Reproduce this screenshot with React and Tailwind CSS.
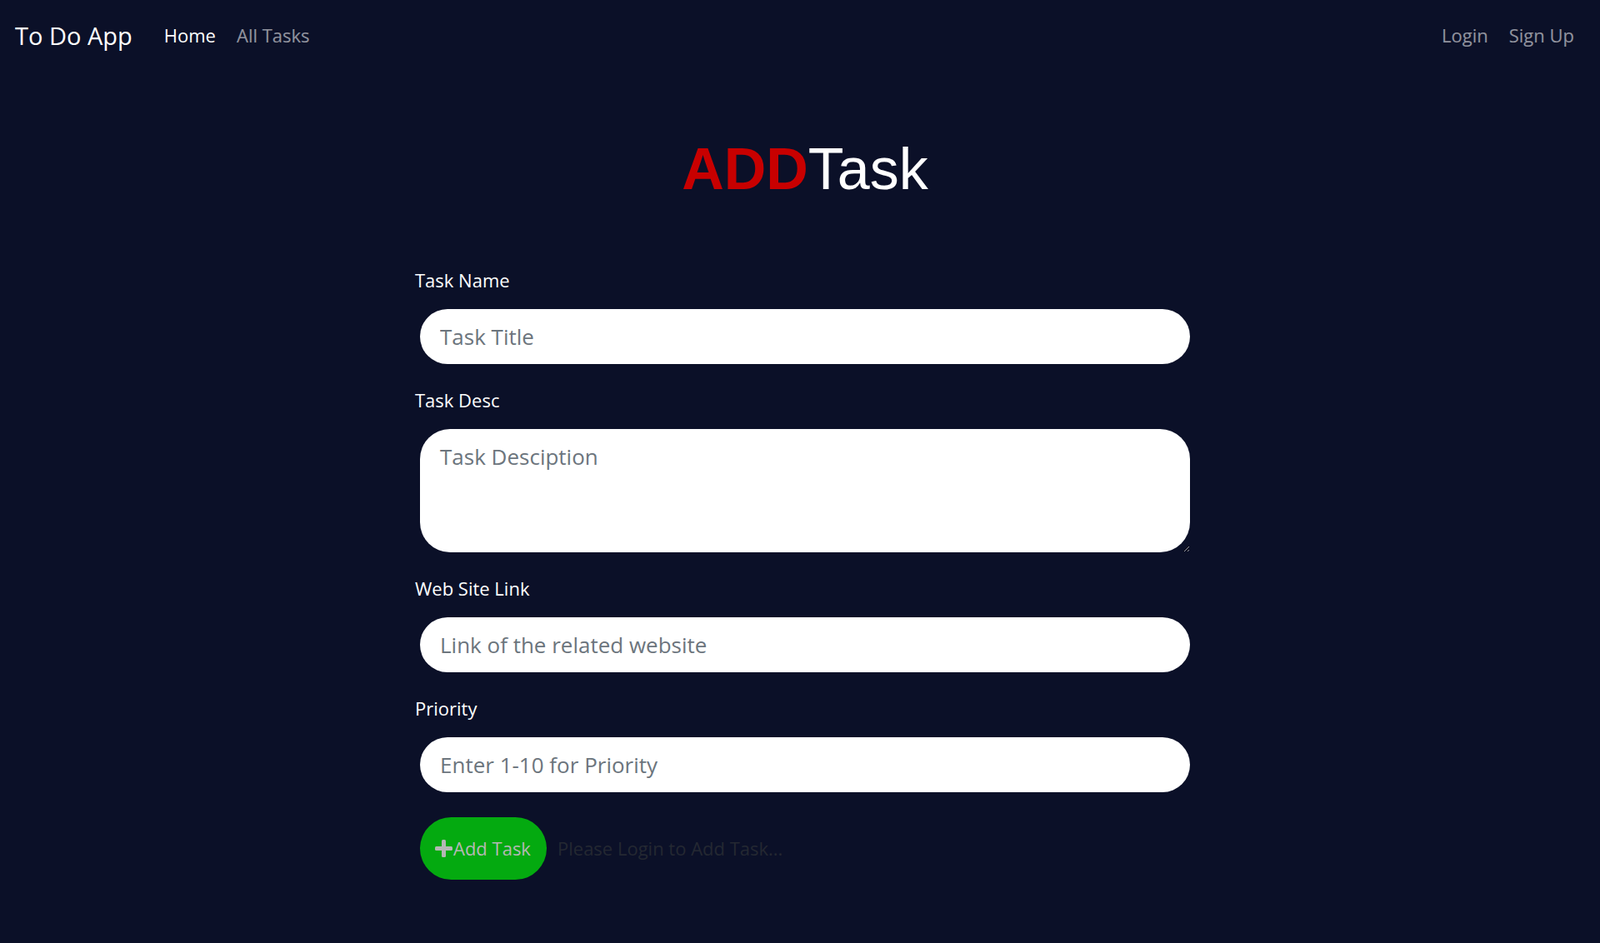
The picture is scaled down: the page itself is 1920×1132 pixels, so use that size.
import React, { useState } from "react";

const font = "font-['Open_Sans',sans-serif]";

const inputCls =
  "block mx-[6px] w-[924px] h-[66px] rounded-full bg-white px-6 text-[26px] text-[#212529] placeholder-[#6c757d] outline-none";

const Field = ({ label, children }) => (
  <div>
    <label className="block text-[22px] leading-[36px] text-white mb-[17px]">{label}</label>
    {children}
  </div>
);

const App = () => {
  const [title, setTitle] = useState("");
  const [desc, setDesc] = useState("");
  const [link, setLink] = useState("");
  const [priority, setPriority] = useState("");

  return (
    <div className={`min-h-screen bg-[#0b1028] ${font}`}>
      <nav className="flex items-center justify-between h-[84px] pl-[18px] pr-[31px]">
        <div className="flex items-center">
          <a href="#" className="text-[29px] leading-[45px] text-white">To Do App</a>
          <div className="flex items-center gap-[25px] ml-[38px] text-[22px]">
            <a href="#" className="text-white">Home</a>
            <a href="#" className="text-white/55">All Tasks</a>
          </div>
        </div>
        <div className="flex items-center gap-[25px] text-[22px]">
          <a href="#" className="text-white/55">Login</a>
          <a href="#" className="text-white/55">Sign Up</a>
        </div>
      </nav>

      <div className="pl-[12px]">
        <div className="w-[936px] mx-auto">
          <h1 className="mt-[84px] mb-[80px] text-center text-[70px] leading-none font-['Liberation_Sans',Arial,sans-serif]">
            <span className="font-bold text-[#c80000]">ADD</span>
            <span className="text-white">Task</span>
          </h1>

          <form onSubmit={(e) => e.preventDefault()}>
            <div className="mb-[25px]">
              <Field label="Task Name">
                <input
                  className={inputCls}
                  placeholder="Task Title"
                  value={title}
                  onChange={(e) => setTitle(e.target.value)}
                />
              </Field>
            </div>
            <div className="mb-[25px]">
              <Field label="Task Desc">
                <textarea
                  className="block mx-[6px] w-[924px] h-[148px] rounded-[36px] bg-white px-6 pt-[14px] pb-[9px] text-[26px] text-[#212529] placeholder-[#6c757d] outline-none"
                  placeholder="Task Desciption"
                  value={desc}
                  onChange={(e) => setDesc(e.target.value)}
                />
              </Field>
            </div>
            <div className="mb-[25px]">
              <Field label="Web Site Link">
                <input
                  className={inputCls}
                  placeholder="Link of the related website"
                  value={link}
                  onChange={(e) => setLink(e.target.value)}
                />
              </Field>
            </div>
            <div className="mb-[30px]">
              <Field label="Priority">
                <input
                  className={inputCls}
                  placeholder="Enter 1-10 for Priority"
                  value={priority}
                  onChange={(e) => setPriority(e.target.value)}
                />
              </Field>
            </div>
            <div className="flex items-center ml-[6px]">
              <button
                type="submit"
                disabled
                className="flex items-center h-[75px] w-[152px] pl-[18px] rounded-full bg-[#04aa10] text-[22px] text-[#b4b8b4]"
              >
                <svg width="21" height="21" viewBox="0 0 21 21" className="mr-[1px]">
                  <rect x="8" y="0" width="5" height="21" rx="1.5" fill="currentColor" />
                  <rect x="0" y="8" width="21" height="5" rx="1.5" fill="currentColor" />
                </svg>
                Add Task
              </button>
              <span className="ml-[13px] text-[22px] text-[#242832]">Please Login to Add Task...</span>
            </div>
          </form>
        </div>
      </div>
    </div>
  );
};

export default App;
